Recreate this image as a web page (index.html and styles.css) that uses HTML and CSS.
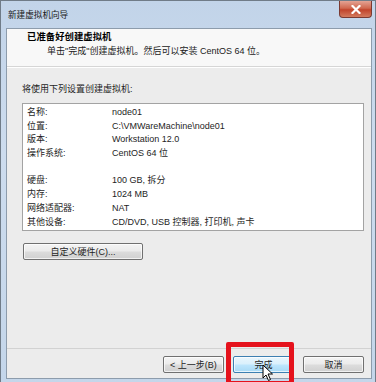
FILE: index.html
```html
<!DOCTYPE html>
<html lang="zh-CN">
<head>
<meta charset="utf-8">
<title>新建虚拟机向导</title>
<link rel="stylesheet" href="styles.css">
</head>
<body>
<div class="window">
  <div class="titlebar">
    <span class="title">新建虚拟机向导</span>
    <span class="close">
      <svg width="10" height="9" viewBox="0 0 10 9"><path d="M1.5 1 L8.5 8 M8.5 1 L1.5 8" stroke="#fff" stroke-width="2.2" stroke-linecap="square"/></svg>
    </span>
  </div>
  <div class="content">
    <div class="header">
      <div class="h-title">已准备好创建虚拟机</div>
      <div class="h-sub">单击"完成"创建虚拟机。然后可以安装 CentOS 64 位。</div>
    </div>
    <div class="body">
      <div class="intro">将使用下列设置创建虚拟机:</div>
      <div class="listbox">
        <div class="row"><span class="k">名称:</span><span>node01</span></div>
        <div class="row"><span class="k">位置:</span><span>C:\VMWareMachine\node01</span></div>
        <div class="row"><span class="k">版本:</span><span>Workstation 12.0</span></div>
        <div class="row"><span class="k">操作系统:</span><span>CentOS 64 位</span></div>
        <div class="row"><span class="k"></span><span></span></div>
        <div class="row"><span class="k">硬盘:</span><span>100 GB, 拆分</span></div>
        <div class="row"><span class="k">内存:</span><span>1024 MB</span></div>
        <div class="row"><span class="k">网络适配器:</span><span>NAT</span></div>
        <div class="row"><span class="k">其他设备:</span><span>CD/DVD, USB 控制器, 打印机, 声卡</span></div>
      </div>
      <div class="btn custom">自定义硬件(C)...</div>
    </div>
    <div class="footer">
      <div class="btn">&lt; 上一步(B)</div>
      <div class="btn focused">完成</div>
      <div class="btn">取消</div>
    </div>
  </div>
  <div class="highlight"></div>
  <svg class="cursor" width="12" height="18" viewBox="0 0 12 18"><path d="M1 1 L1 14 L4 11 L6.5 16.5 L8.5 15.5 L6 10 L10.5 10 Z" fill="#fff" stroke="#000" stroke-width="1" stroke-linejoin="round"/></svg>
</div>
</body>
</html>
```

FILE: styles.css
```css
html, body {
  margin: 0;
  padding: 0;
}
body {
  width: 376px;
  height: 382px;
  overflow: hidden;
  font-family: "Liberation Sans", "Noto Sans CJK SC", sans-serif;
  font-size: 9px;
  color: #1e1e1e;
}
.window {
  position: relative;
  box-sizing: border-box;
  width: 376px;
  height: 382px;
  border: 1px solid #707c88;
  border-bottom: none;
  background: linear-gradient(180deg, #c2d4e9 0%, #cddcee 40%, #c4d6ea 100%);
  display: flex;
  flex-direction: column;
}
.titlebar {
  height: 27px;
  display: flex;
  justify-content: space-between;
  align-items: flex-start;
  padding-left: 7px;
}
.title {
  margin-top: 7px;
  color: #1a1a1a;
  font-size: 8.6px;
}
.close {
  width: 33px;
  height: 17px;
  margin-right: 3px;
  box-sizing: border-box;
  border: 1px solid #7a3a32;
  border-top: none;
  border-radius: 0 0 4px 4px;
  background: linear-gradient(180deg, #e4a394 0%, #d0684f 45%, #c1442c 55%, #d37a5e 100%);
  display: flex;
  align-items: center;
  justify-content: center;
}
.content {
  flex: 1;
  margin: 0 3px 3px 5px;
  border: 1px solid #8d9cac;
  background: #ececec;
  display: flex;
  flex-direction: column;
}
.header {
  height: 38px;
  background: #f8f8f8;
  border-bottom: 1px solid #d6d6d6;
  padding-left: 20px;
  padding-top: 1px;
  box-sizing: border-box;
}
.h-title {
  font-weight: bold;
  line-height: 14px;
  height: 14px;
  font-size: 9.4px;
  color: #000;
}
.h-sub {
  padding-left: 20px;
  line-height: 15px;
  color: #222;
}
.body {
  flex: 1;
  padding: 14px 7px 0 15px;
  display: flex;
  flex-direction: column;
  align-items: flex-start;
  border-top: 1px solid #fff;
}
.intro {
  line-height: 14px;
  height: 14px;
}
.listbox {
  margin-top: 7px;
  align-self: stretch;
  height: 128px;
  box-sizing: border-box;
  border: 1px solid #a3a3a3;
  background: #fff;
  padding: 2px 0 0 4px;
}
.row {
  display: flex;
  height: 13.7px;
  line-height: 13.7px;
  white-space: nowrap;
}
.k {
  width: 85px;
  flex: none;
}
.btn {
  box-sizing: border-box;
  height: 17px;
  border: 1px solid #707070;
  border-radius: 2px;
  background: linear-gradient(180deg, #f4f4f4 0%, #ebebeb 48%, #dcdcdc 52%, #d0d0d0 100%);
  box-shadow: inset 0 0 0 1px rgba(255,255,255,0.7);
  display: flex;
  align-items: center;
  justify-content: center;
  color: #1e1e1e;
}
.custom {
  margin-top: 12px;
  margin-left: 1px;
  width: 120px;
}
.footer {
  height: 30px;
  box-sizing: border-box;
  border-top: 1px solid #d2d2d2;
  padding: 7px 7px 0 0;
  display: flex;
  justify-content: flex-end;
  gap: 9px;
}
.footer .btn {
  width: 61px;
}
.footer .btn.focused {
  border-color: #3c7fb1;
  background: linear-gradient(180deg, #eaf6fd 0%, #d9f0fc 48%, #bee6fd 52%, #a7d9f5 100%);
}
.highlight {
  position: absolute;
  left: 225px;
  top: 341px;
  width: 68px;
  height: 44px;
  box-sizing: border-box;
  border: 5px solid #e5121c;
  border-radius: 2px;
}
.cursor {
  position: absolute;
  left: 261px;
  top: 363px;
}
```
